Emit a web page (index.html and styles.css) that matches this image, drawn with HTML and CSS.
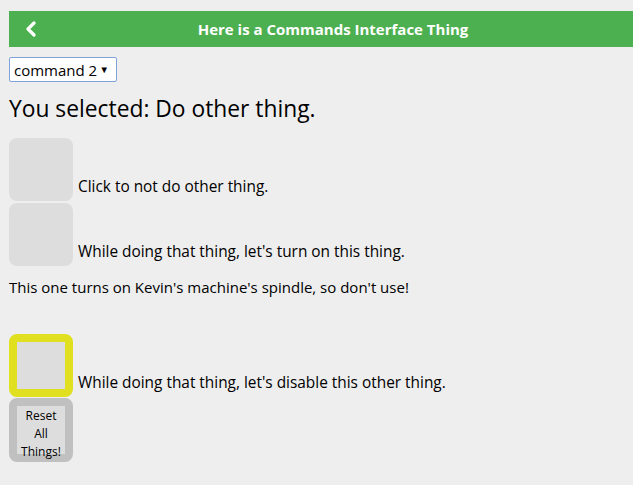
FILE: index.html
```html
<!DOCTYPE html>
<html>
<head>
<meta charset="utf-8">
<link rel="stylesheet" href="styles.css">
</head>
<body>
<div class="page">
  <header class="topbar">
    <div class="back">
      <svg width="12" height="16" viewBox="0 0 12 16"><polyline points="9,2 3,8 9,14" fill="none" stroke="#fff" stroke-width="3.2" stroke-linecap="round" stroke-linejoin="round"/></svg>
    </div>
    <div class="title">Here is a Commands Interface Thing</div>
    <div></div>
  </header>

  <div class="select-wrap">
    <select class="cmd-select">
      <option>command 1</option>
      <option selected>command 2</option>
    </select>
    <span class="caret">▼</span>
  </div>

  <h1 class="selected">You selected: Do other thing.</h1>

  <div class="cmd-row first">
    <div class="tile"></div>
    <span class="label">Click to not do other thing.</span>
  </div>
  <div class="cmd-row second">
    <div class="tile"></div>
    <span class="label">While doing that thing, let's turn on this thing.</span>
  </div>

  <p class="note">This one turns on Kevin's machine's spindle, so don't use!</p>

  <div class="cmd-row third">
    <div class="tile tile-active"></div>
    <span class="label">While doing that thing, let's disable this other thing.</span>
  </div>
  <div class="cmd-row fourth">
    <div class="tile tile-reset"><span>Reset</span> <span>All</span> <span>Things!</span></div>
  </div>
</div>
</body>
</html>
```

FILE: styles.css
```css
html, body {
  margin: 0;
  padding: 0;
  overflow: hidden;
  background: #eeeeee;
}
body {
  font-family: "Open Sans", "Noto Sans", sans-serif;
  color: #111;
}
.page {
  padding: 11px 0 0 9px;
}
.topbar {
  width: 648px;
  height: 36px;
  background: #4caf50;
  display: grid;
  grid-template-columns: 1fr auto 1fr;
  align-items: center;
}
.back {
  padding-left: 16px;
  display: flex;
  align-items: center;
}
.back svg { display: block; }
.title {
  color: #fff;
  font-weight: bold;
  font-size: 15px;
}
.select-wrap {
  margin-top: 10px;
  position: relative;
  display: inline-block;
}
.cmd-select {
  appearance: none;
  -webkit-appearance: none;
  width: 108px;
  height: 25px;
  box-sizing: border-box;
  border: 1px solid #7fa3d9;
  border-radius: 2px;
  background: #fff;
  font-family: "Open Sans", "Noto Sans", sans-serif;
  font-size: 15px;
  color: #000;
  padding: 0 0 0 4px;
  outline: none;
  display: block;
}
.caret {
  position: absolute;
  right: 8px;
  top: 6px;
  font-size: 9.5px;
  color: #000;
  pointer-events: none;
}
.selected {
  margin: 13px 0 0 0;
  font-size: 22.8px;
  line-height: 28px;
  font-weight: normal;
  color: #000;
}
.cmd-row {
  display: flex;
  align-items: flex-end;
}
.cmd-row.first { margin-top: 15px; }
.cmd-row.second { margin-top: 2px; }
.cmd-row.third { margin-top: 0; }
.cmd-row.fourth { margin-top: 1px; }
.tile {
  width: 64px;
  height: 63px;
  box-sizing: border-box;
  border-radius: 8px;
  background: #dddddd;
  flex: none;
}
.tile-active {
  border: 8px solid #e0e020;
}
.tile-reset {
  border: 8px solid #c0c0c0;
  height: 64px;
  font-size: 12px;
  line-height: 18px;
  padding-top: 1px;
  color: #000;
  display: flex;
  flex-direction: column;
  align-items: center;
}
.tile-reset span {
  white-space: nowrap;
}
.label {
  margin: 0 0 4px 5px;
  font-size: 15.4px;
  line-height: 20px;
  color: #000;
}
.note {
  margin: 11px 0 37px 0;
  font-size: 15px;
  line-height: 20px;
  color: #000;
}
```
